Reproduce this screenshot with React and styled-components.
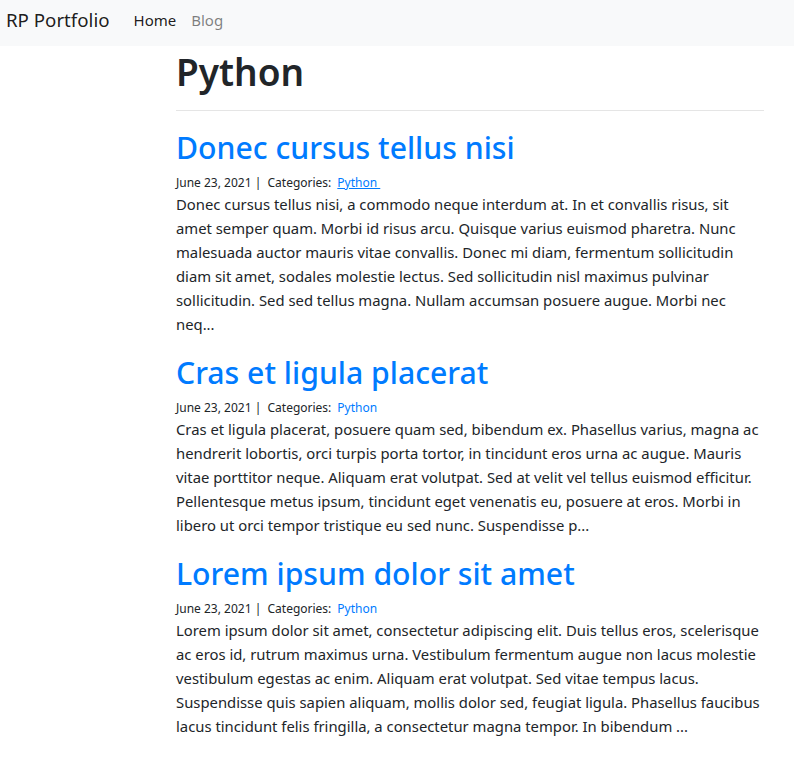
import React from 'react';
import styled, { createGlobalStyle } from 'styled-components';

const GlobalStyle = createGlobalStyle`
  * { box-sizing: border-box; }
  body {
    margin: 0;
    font-family: "Noto Sans", "Open Sans", Arial, sans-serif;
    font-size: 14.83px;
    line-height: 24px;
    color: #212529;
    background: #fff;
  }
`;

const Navbar = styled.nav`
  display: flex;
  align-items: center;
  height: 46px;
  padding: 0 6px 6px;
  background-color: #f8f9fa;
`;

const Brand = styled.a`
  font-size: 18.7px;
  color: rgba(0, 0, 0, 0.9);
  margin-right: 24px;
  text-decoration: none;
`;

const NavLink = styled.a`
  font-size: 15px;
  margin-right: 15px;
  color: ${(p) => (p.$active ? 'rgba(0, 0, 0, 0.9)' : 'rgba(0, 0, 0, 0.5)')};
  text-decoration: none;
`;

const Main = styled.main`
  width: 588px;
  margin-left: 176px;
`;

const PageTitle = styled.h1`
  margin: 2px 0 0;
  font-size: 37px;
  line-height: 48px;
  font-weight: 600;
`;

const Rule = styled.hr`
  margin: 14px 0 16px;
  border: 0;
  border-top: 1px solid rgba(0, 0, 0, 0.1);
`;

const Post = styled.article`
  margin-bottom: 16px;
`;

const PostTitle = styled.h2`
  margin: 0;
  font-size: 30.2px;
  line-height: 42px;
  font-weight: 500;
  a {
    color: #007bff;
    text-decoration: none;
  }
`;

const Meta = styled.div`
  display: flex;
  font-size: 12px;
  line-height: 18px;
  margin-top: 5px;
`;

const CatLink = styled.a`
  margin-left: 6px;
  color: #007bff;
  text-decoration: ${(p) => (p.$underline ? 'underline' : 'none')};
`;

const Body = styled.p`
  margin: 0;
`;

const posts = [
  {
    title: 'Donec cursus tellus nisi',
    underline: true,
    body: 'Donec cursus tellus nisi, a commodo neque interdum at. In et convallis risus, sit amet semper quam. Morbi id risus arcu. Quisque varius euismod pharetra. Nunc malesuada auctor mauris vitae convallis. Donec mi diam, fermentum sollicitudin diam sit amet, sodales molestie lectus. Sed sollicitudin nisl maximus pulvinar sollicitudin. Sed sed tellus magna. Nullam accumsan posuere augue. Morbi nec neq...',
  },
  {
    title: 'Cras et ligula placerat',
    body: 'Cras et ligula placerat, posuere quam sed, bibendum ex. Phasellus varius, magna ac hendrerit lobortis, orci turpis porta tortor, in tincidunt eros urna ac augue. Mauris vitae porttitor neque. Aliquam erat volutpat. Sed at velit vel tellus euismod efficitur. Pellentesque metus ipsum, tincidunt eget venenatis eu, posuere at eros. Morbi in libero ut orci tempor tristique eu sed nunc. Suspendisse p...',
  },
  {
    title: 'Lorem ipsum dolor sit amet',
    body: 'Lorem ipsum dolor sit amet, consectetur adipiscing elit. Duis tellus eros, scelerisque ac eros id, rutrum maximus urna. Vestibulum fermentum augue non lacus molestie vestibulum egestas ac enim. Aliquam erat volutpat. Sed vitae tempus lacus. Suspendisse quis sapien aliquam, mollis dolor sed, feugiat ligula. Phasellus faucibus lacus tincidunt felis fringilla, a consectetur magna tempor. In bibendum ...',
  },
];

export default function App() {
  return (
    <>
      <GlobalStyle />
      <Navbar>
        <Brand href="#">RP Portfolio</Brand>
        <NavLink href="#" $active>Home</NavLink>
        <NavLink href="#">Blog</NavLink>
      </Navbar>
      <Main>
        <PageTitle>Python</PageTitle>
        <Rule />
        {posts.map((post) => (
          <Post key={post.title}>
            <PostTitle>
              <a href="#">{post.title}</a>
            </PostTitle>
            <Meta>
              <span>June 23, 2021 |&nbsp; Categories:</span>
              <CatLink href="#" $underline={post.underline}>Python&nbsp;</CatLink>
            </Meta>
            <Body>{post.body}</Body>
          </Post>
        ))}
      </Main>
    </>
  );
}
